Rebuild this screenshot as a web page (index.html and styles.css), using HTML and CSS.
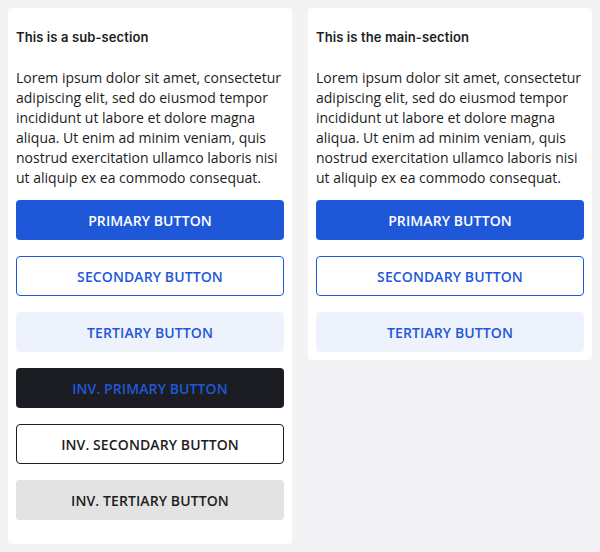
FILE: index.html
```html
<!DOCTYPE html>
<html>
<head>
<meta charset="utf-8">
<link rel="stylesheet" href="styles.css">
</head>
<body>
<div class="layout">
  <section class="card card-sub">
    <h2 class="card-title">This is a sub-section</h2>
    <p class="card-text">Lorem ipsum dolor sit amet, consectetur adipiscing elit, sed do eiusmod tempor incididunt ut labore et dolore magna aliqua. Ut enim ad minim veniam, quis nostrud exercitation ullamco laboris nisi ut aliquip ex ea commodo consequat.</p>
    <div class="buttons">
      <button class="btn btn-primary">Primary button</button>
      <button class="btn btn-secondary">Secondary button</button>
      <button class="btn btn-tertiary">Tertiary button</button>
      <button class="btn btn-inv-primary">Inv. primary button</button>
      <button class="btn btn-inv-secondary">Inv. secondary button</button>
      <button class="btn btn-inv-tertiary">Inv. tertiary button</button>
    </div>
  </section>
  <section class="card card-main">
    <h2 class="card-title">This is the main-section</h2>
    <p class="card-text">Lorem ipsum dolor sit amet, consectetur adipiscing elit, sed do eiusmod tempor incididunt ut labore et dolore magna aliqua. Ut enim ad minim veniam, quis nostrud exercitation ullamco laboris nisi ut aliquip ex ea commodo consequat.</p>
    <div class="buttons">
      <button class="btn btn-primary">Primary button</button>
      <button class="btn btn-secondary">Secondary button</button>
      <button class="btn btn-tertiary">Tertiary button</button>
    </div>
  </section>
</div>
</body>
</html>
```
FILE: styles.css
```css
html, body {
  margin: 0;
  padding: 0;
  background: #f3f3f5;
}
body {
  font-family: "Open Sans", "Liberation Sans", sans-serif;
  color: #1c1d22;
}
.layout {
  display: flex;
  align-items: flex-start;
  gap: 16px;
  padding: 8px;
}
.card {
  flex: 1;
  background: #ffffff;
  border-radius: 4px;
  padding: 8px 8px 8px;
}
.card-sub {
  padding-bottom: 24px;
}
.card-title {
  margin: 0;
  padding-top: 11px;
  font-family: "Inter", "Lato", sans-serif;
  font-size: 13px;
  font-weight: 600;
  letter-spacing: 0.1px;
  line-height: 20px;
  color: #1c1d22;
}
.card-text {
  margin: 21px 0 0;
  font-size: 14px;
  line-height: 20px;
  color: #1c1d22;
}
.buttons {
  display: flex;
  flex-direction: column;
  gap: 16px;
  margin-top: 12px;
}
.btn {
  height: 40px;
  border-radius: 4px;
  border: 1px solid transparent;
  font-family: "Open Sans", sans-serif;
  font-size: 14px;
  font-weight: 600;
  text-transform: uppercase;
  letter-spacing: 0.1px;
  cursor: pointer;
  padding: 0;
}
.btn-primary {
  background: #1e58d9;
  color: #ffffff;
}
.btn-secondary {
  background: #ffffff;
  border-color: #1e58d9;
  color: #1e58d9;
}
.btn-tertiary {
  background: #edf2fc;
  color: #1e58d9;
}
.btn-inv-primary {
  background: #1c1d22;
  color: #1e58d9;
}
.btn-inv-secondary {
  background: #ffffff;
  border-color: #1c1d22;
  color: #1c1d22;
}
.btn-inv-tertiary {
  background: #e3e3e3;
  color: #1c1d22;
}
```
